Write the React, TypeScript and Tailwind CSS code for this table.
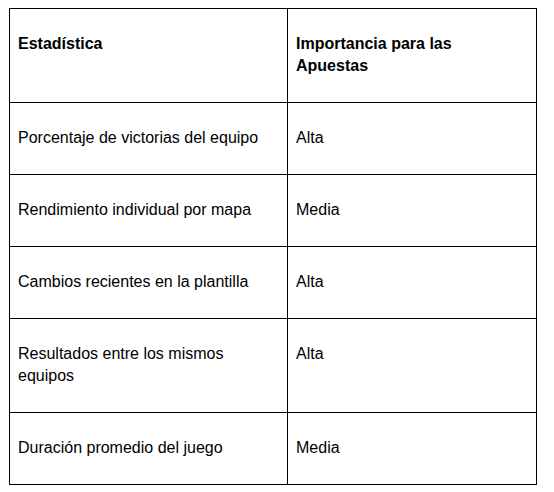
import React from 'react';

const rows = [
  { stat: 'Porcentaje de victorias del equipo', importance: 'Alta' },
  { stat: 'Rendimiento individual por mapa', importance: 'Media' },
  { stat: 'Cambios recientes en la plantilla', importance: 'Alta' },
  { stat: 'Resultados entre los mismos equipos', importance: 'Alta' },
  { stat: 'Duración promedio del juego', importance: 'Media' },
];

export default function App() {
  return (
    <div className="min-h-screen bg-white pl-[9px] pt-[8px] font-['Liberation_Sans',Arial,sans-serif] text-[16px] leading-[22px] text-black">
      <table className="w-[527px] table-fixed border-collapse">
        <colgroup>
          <col className="w-[278px]" />
          <col className="w-[249px]" />
        </colgroup>
        <thead>
          <tr>
            <th className="border border-black pl-2 pr-4 pt-[24px] pb-[25px] text-left align-top font-bold">Estadística</th>
            <th className="border border-black pl-2 pr-4 pt-[24px] pb-[25px] text-left align-top font-bold">
              Importancia para las Apuestas
            </th>
          </tr>
        </thead>
        <tbody>
          {rows.map((r) => (
            <tr key={r.stat}>
              <td className="border border-black pl-2 pr-4 pt-[24px] pb-[25px] align-top">{r.stat}</td>
              <td className="border border-black pl-2 pr-4 pt-[24px] pb-[25px] align-top">{r.importance}</td>
            </tr>
          ))}
        </tbody>
      </table>
    </div>
  );
}
